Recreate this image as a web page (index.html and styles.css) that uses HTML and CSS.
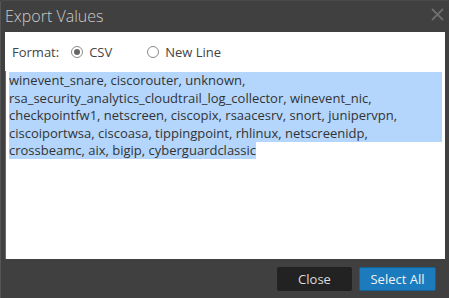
FILE: index.html
```html
<!DOCTYPE html>
<html lang="en">
<head>
    <meta charset="UTF-8">
    <title>Export Values</title>
    <link rel="stylesheet" href="styles.css">
</head>
<body>
    <div class="dialog">
        <div class="dialog-header">
            <span class="dialog-title">Export Values</span>
            <svg class="close-icon" width="13" height="13" viewBox="0 0 13 13">
                <path d="M1 1 L12 12 M12 1 L1 12" stroke="#6e6e6e" stroke-width="1.8" fill="none"/>
            </svg>
        </div>

        <div class="dialog-body">
            <div class="format-row">
                <span class="format-label">Format:</span>
                <label class="radio radio-checked"><span class="radio-dot"></span>CSV</label>
                <label class="radio"><span class="radio-dot"></span>New Line</label>
            </div>
            <div class="values-box">
                <div class="sel-line">winevent_snare, ciscorouter, unknown,</div>
                <div class="sel-line">rsa_security_analytics_cloudtrail_log_collector, winevent_nic,</div>
                <div class="sel-line">checkpointfw1, netscreen, ciscopix, rsaacesrv, snort, junipervpn,</div>
                <div class="sel-line">ciscoiportwsa, ciscoasa, tippingpoint, rhlinux, netscreenidp,</div>
                <div><span class="sel-text">crossbeamc, aix, bigip, cyberguardclassic</span></div>
            </div>
        </div>

        <div class="dialog-footer">
            <button class="btn btn-dark">Close</button>
            <button class="btn btn-primary">Select All</button>
        </div>
    </div>
</body>
</html>
```

FILE: styles.css
```css
html, body {
    margin: 0;
    padding: 0;
    background: #404040;
}

body {
    font-family: "Open Sans", Arial, sans-serif;
    font-size: 13px;
    color: #333;
}

.dialog {
    width: 449px;
    height: 298px;
    box-sizing: border-box;
    background: #404040;
    border-left: 1px solid #555;
    border-top: 1px solid #4a4a4a;
    border-radius: 3px 3px 0 0;
    display: flex;
    flex-direction: column;
}

.dialog-header {
    height: 31px;
    display: flex;
    align-items: center;
    justify-content: space-between;
    padding: 0 5px 0 4px;
}

.dialog-title {
    font-size: 16px;
    font-weight: 300;
    color: #cbcbcb;
    margin-top: -1px;
}

.close-icon {
    margin-top: -4px;
}

.dialog-body {
    background: #fff;
    margin: 0 4px 0 4px;
    height: 227px;
    display: flex;
    flex-direction: column;
}

.format-row {
    height: 39px;
    display: flex;
    align-items: center;
    padding-left: 7px;
    color: #444;
}

.format-label {
    margin-right: 12px;
}

.radio {
    display: flex;
    align-items: center;
    gap: 6px;
    margin-right: 35px;
}

.radio-dot {
    width: 10px;
    height: 10px;
    border: 1px solid #8a8a8a;
    border-radius: 50%;
    position: relative;
}

.radio-checked .radio-dot::after {
    content: "";
    position: absolute;
    left: 2px;
    top: 2px;
    width: 6px;
    height: 6px;
    border-radius: 50%;
    background: #666;
}

.values-box {
    flex: 1;
    border-left: 1px solid #6a6a6a;
    padding: 1px 3px 0 3px;
    line-height: 17.6px;
    color: #333;
    white-space: nowrap;
}

.sel-line,
.sel-text {
    background: #b4d6fd;
}

.dialog-footer {
    flex: 1;
    display: flex;
    justify-content: flex-end;
    align-items: flex-start;
    gap: 7px;
    padding: 8px 13px 0 0;
}

.btn {
    font-family: "Open Sans", Arial, sans-serif;
    font-size: 13px;
    height: 24px;
    border-radius: 2px;
    padding: 0;
    cursor: pointer;
}

.btn-dark {
    width: 75px;
    background: #222;
    color: #ddd;
    border: 1px solid #222;
}

.btn-primary {
    width: 77px;
    background: #1b7bbc;
    color: #f2f2f2;
    border: 1px solid #13639b;
}
```
